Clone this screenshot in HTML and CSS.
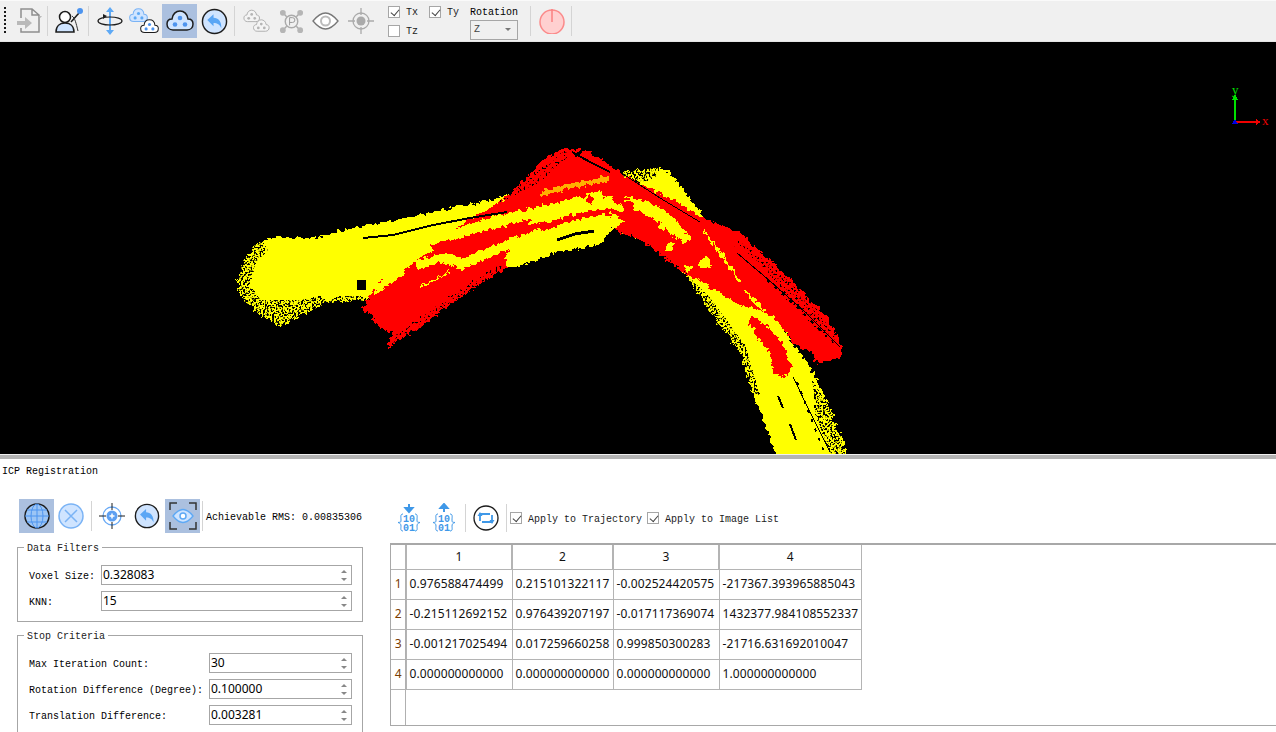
FILE: index.html
```html
<!DOCTYPE html>
<html lang="en">
<head>
<meta charset="utf-8">
<title>ICP Registration</title>
<link rel="stylesheet" href="styles.css">
</head>
<body>
<svg class="defs" width="0" height="0" aria-hidden="true">
  <defs>
    <symbol id="cloud" viewBox="0 0 28 24"><path d="M7 21C3 21 1 18 1 15 1 12 3 10 6 10 6.500 5 10 2 14 2 18 2 21.500 5 22 10 25 10 27 12 27 15 27 18 25 21 21 21Z"/><circle class="d" cx="14" cy="9" r="2.300"/><circle class="d" cx="9" cy="15.500" r="2.300"/><circle class="d" cx="19" cy="15.500" r="2.300"/></symbol>
    <symbol id="back" viewBox="0 0 28 28"><circle cx="14" cy="14" r="12.500" fill="#cfe4ff" stroke="#1c1c1c" stroke-width="1.500"/><path d="M6.500 12.500 13 6.500V10C18 10 21.500 14 21 21 19.500 17 17 15.500 13 15.500V19Z" fill="#5aa6f5"/></symbol>
    <filter id="rough" x="-5%" y="-5%" width="110%" height="110%" color-interpolation-filters="sRGB"><feTurbulence type="fractalNoise" baseFrequency=".22" numOctaves="2" seed="4" result="n"/><feDisplacementMap in="SourceGraphic" in2="n" scale="8" xChannelSelector="R" yChannelSelector="G"/></filter>
    <filter id="speck" x="-5%" y="-5%" width="110%" height="110%" color-interpolation-filters="sRGB"><feTurbulence type="fractalNoise" baseFrequency=".55" numOctaves="1" seed="9"/><feColorMatrix values="0 0 0 0 0 0 0 0 0 0 0 0 0 0 0 14 0 0 0 -7" result="m"/><feComposite in="SourceGraphic" in2="m" operator="in"/></filter>
    <filter id="sparse" x="-5%" y="-5%" width="110%" height="110%" color-interpolation-filters="sRGB"><feTurbulence type="fractalNoise" baseFrequency=".5" numOctaves="1" seed="21"/><feColorMatrix values="0 0 0 0 0 0 0 0 0 0 0 0 0 0 0 14 0 0 0 -8.300" result="m"/><feComposite in="SourceGraphic" in2="m" operator="in"/></filter>
  </defs>
</svg>
<div class="app">
  <header class="toolbar">
    <span class="grip"></span>
    <button class="tool first"><svg width="26" height="28" viewBox="0 0 26 28"><path d="M4 11V2H15L22 8V25H4V21M15 2V8H22" fill="none" stroke="#8e8e8e" stroke-width="1.500"/><path d="M0 14H8V10L15 16 8 22V18H0Z" fill="#b9b9b9"/><path d="M22 9h3l-1.500 2z" fill="#bbb"/></svg></button>
    <span class="sep s1a"></span>
    <button class="tool w28"><svg width="28" height="28" viewBox="0 0 28 28"><circle cx="10" cy="10" r="5.500" fill="#fff" stroke="#1c1c1c" stroke-width="1.500"/><path d="M1 25C1 19 5 16 10 16S19 19 19 25Z" fill="#cfe4ff" stroke="#1c1c1c" stroke-width="1.500"/><path d="M16 15 24 6" stroke="#1c1c1c" stroke-width="1.500"/><path d="M17 9C20 11 21 16 23 24" fill="none" stroke="#333"/><circle cx="25" cy="4" r="3" fill="#4d94ef"/></svg></button>
    <span class="sep"></span>
    <button class="tool w28"><svg width="26" height="30" viewBox="0 0 26 30"><path d="M13 1 9 6H12V24H9L13 29 17 24H14V6H17Z" fill="#5ea9f5"/><ellipse cx="13" cy="15" rx="12" ry="4" fill="none" stroke="#1c1c1c" stroke-width="1.200"/><path d="M6 8 10 10 6 13Z" fill="#1c1c1c"/></svg></button>
    <button class="tool w30 m5"><svg width="30" height="28" viewBox="0 0 30 28"><use href="#cloud" class="c-blue" x="0" y="0" width="19" height="17"/><use href="#cloud" class="c-dark" x="11" y="11" width="19" height="17"/></svg></button>
    <button class="tool w35 on m3"><svg width="28" height="24" viewBox="0 0 28 24"><use href="#cloud" class="c-dark big" width="28" height="24"/></svg></button>
    <button class="tool w30 m2"><svg width="27" height="27"><use href="#back" width="27" height="27"/></svg></button>
    <span class="sep s2"></span>
    <button class="tool w28 m1"><svg width="27" height="25" viewBox="0 0 28 26"><use href="#cloud" class="c-grey" x="0" y="0" width="18" height="15"/><use href="#cloud" class="c-grey" x="10" y="10" width="18" height="15"/></svg></button>
    <button class="tool w28 m7"><svg width="25" height="25" viewBox="0 0 26 26"><g stroke="#aaa" stroke-width="1.500" fill="none"><circle cx="13" cy="13" r="6.500"/><path d="M4 4 8 8M22 4 18 8M4 22 8 18M22 22 18 18"/></g><g fill="#b5b5b5"><circle cx="4" cy="4" r="3"/><circle cx="22" cy="4" r="3"/><circle cx="4" cy="22" r="3"/><circle cx="22" cy="22" r="3"/></g><path d="M11 17V9h3a2.200 2.200 0 0 1 0 5h-3" fill="none" stroke="#999"/></svg></button>
    <button class="tool w28 m6"><svg width="27" height="18" viewBox="0 0 27 18"><path d="M1 9C6 3 10 1 13.500 1S21 3 26 9C21 15 17 17 13.500 17S6 15 1 9Z" fill="#fff" stroke="#777" stroke-width="1.300"/><circle cx="13.500" cy="9" r="4.500" fill="#fff" stroke="#bbb" stroke-width="2"/></svg></button>
    <button class="tool w28 m8"><svg width="26" height="26" viewBox="0 0 26 26"><circle cx="13" cy="13" r="8" fill="none" stroke="#aaa" stroke-width="1.300"/><circle cx="13" cy="13" r="4.500" fill="#aaa"/><path d="M13 0V7M13 19V26M0 13H7M19 13H26" stroke="#aaa" stroke-width="1.300"/></svg></button>
    <div class="axes">
      <label class="check"><span class="box ticked"></span><span class="t">Tx</span></label>
      <label class="check"><span class="box ticked"></span><span class="t">Ty</span></label>
      <label class="check"><span class="box"></span><span class="t">Tz</span></label>
    </div>
    <div class="rotation">
      <span class="rot-title">Rotation</span>
      <div class="combo"><span>Z</span><i class="caret"></i></div>
    </div>
    <span class="sep s4"></span>
    <button class="tool w28 power"><svg width="26" height="26" viewBox="0 0 26 26"><circle cx="13" cy="14" r="12" fill="#ffd0d0" stroke="#fb8a8a" stroke-width="1.500"/><path d="M13 1V14" stroke="#fb8080" stroke-width="1.500"/></svg></button>
    <span class="sep s5"></span>
  </header>

  <main class="viewport">
    <svg class="cloud-svg" width="1276" height="412" viewBox="0 42 1276 412">
      <g class="axis">
        <path d="M1235 122V98" stroke="#00e000" stroke-width="2"/><path d="M1232 100 1235 94 1238 100Z" fill="#00e000"/>
        <path d="M1235 122H1258" stroke="#f00000" stroke-width="2"/><path d="M1256 119 1261 122 1256 125Z" fill="#f00000"/>
        <path d="M1235 119 1238 124H1232Z" fill="#0000e0"/>
        <text class="ax-y" x="1232" y="94">y</text><text class="ax-x" x="1262" y="125">x</text>
      </g>

      <g filter="url(#rough)">
        <polygon class="y" points="237,283 245,257 257,243 277,237 310,239 353,228 420,215 483,202 520,192 560,178 600,172 623,172 657,168 668,172 673,176 700,212 740,260 790,340 810,367 827,400 848,456 777,456 753,393 740,353 720,327 687,277 660,250 640,240 612,228 603,242 590,247 560,250 540,257 507,267 460,285 420,290 363,300 327,303 297,317 280,327 257,313 240,295"/>
      </g>
      <g filter="url(#speck)">
        <polygon class="k" points="232,285 245,252 262,240 268,250 256,262 250,285 262,302 292,312 280,335 245,322"/>
        <polygon class="k" points="262,300 300,300 320,296 330,303 300,316 280,326"/>
        <polygon class="k" points="685,272 712,300 745,345 760,395 752,395 735,350 715,325 686,282"/>
        <polygon class="k" points="300,312 340,296 365,296 362,303 330,306 302,320"/>
        <polygon class="k" points="614,166 660,158 658,176 640,184 618,180"/>
        <polygon class="k" points="812,380 835,415 845,454 830,454 815,415"/>
      </g>
      <g filter="url(#rough)">
        <polygon class="r" points="363,308 377,283 417,253 440,237 503,200 540,163 563,148 587,150 627,177 667,197 707,220 740,233 773,263 807,297 827,317 842,347 840,358 817,363 808,345 793,330 773,312 740,305 713,289 683,272 640,240 610,227 540,253 507,267 460,297 420,327 388,348 393,332 383,330"/>
        <polygon class="r" points="752,315 765,325 780,340 792,365 785,378 775,375 768,350 755,335"/>
      </g>
      <g filter="url(#sparse)">
        <polygon class="k" points="392,348 425,324 465,297 508,270 500,264 460,288 420,316 392,338"/>
        <polygon class="k" points="535,172 565,150 575,150 540,182 495,205"/>
        <polygon class="k" points="738,240 775,268 810,300 838,340 832,345 800,312 765,280 732,250"/>
        <polygon class="k" points="615,228 650,245 690,274 680,276 645,254 612,236"/>
      </g>
      <g filter="url(#rough)">
        <polygon class="y" points="372,288 417,250 440,233 503,214 540,206 585,196 600,190 606,200 570,212 540,222 500,230 470,235 440,245 415,262 380,292"/>
        <polygon class="y" points="540,232 575,220 610,212 625,222 608,232 590,247 560,252 540,258 510,268 503,256 520,240"/>
        <polygon class="y" points="415,262 445,252 462,258 500,243 540,228 545,238 500,252 462,270 442,262 418,270"/>
      </g>
      <g class="streaks" filter="url(#rough)">
        <polyline class="sy w12" points="545,218 575,207 610,203 640,205 665,218 682,236"/>
        <polyline class="sy w2" points="375,293 405,272"/>
        <polyline class="sy w2" points="420,287 450,272"/>
        <polyline class="so w5" points="540,194 570,186 610,178"/>
        <polyline class="sr w5" points="430,247 470,238 500,230 530,222"/>
      </g>
      <g filter="url(#rough)">
        <polygon class="r" points="692,232 715,232 745,250 775,280 800,318 812,352 795,345 775,318 745,305 715,287 695,268"/>
      </g>
      <g class="streaks" filter="url(#rough)">
        <polyline class="sy w2" points="703,230 722,255 740,282"/>
        <polyline class="sy w2" points="745,290 765,312"/>
      </g>
      <g filter="url(#rough)" class="blobs">
        <circle class="y" cx="661" cy="227" r="4"/><circle class="y" cx="685" cy="237" r="5"/><circle class="y" cx="670" cy="247" r="4"/><circle class="y" cx="705" cy="263" r="6"/><circle class="y" cx="688" cy="268" r="3"/><circle class="y" cx="722" cy="255" r="3"/>
        <circle class="r" cx="590" cy="200" r="4"/><circle class="r" cx="618" cy="199" r="6"/><circle class="r" cx="628" cy="205" r="6"/><circle class="r" cx="607" cy="213" r="3"/><circle class="r" cx="753" cy="322" r="5"/>
      </g>
      <g class="slits">
        <polyline class="s2" points="363,238 393,235 433,225 470,218 507,212"/>
        <polyline class="s1" points="737,253 770,281 805,312 840,347"/>
        <polyline class="d3" points="767,280 800,310 827,337"/>
        <polyline class="s1" points="793,377 810,412 830,452"/>
        <polyline class="d3" points="797,382 808,410 824,452"/>
        <polyline class="s2" points="778,396 783,408"/><polyline class="s2" points="790,424 796,440"/>
        <polyline class="s3" points="557,240 575,234 594,231"/>
        <polyline class="s2" points="572,152 590,162 610,172"/><polyline class="s3" points="575,156 582,151"/>
        <polyline class="s1" points="620,172 660,198 700,222"/>
        <rect x="357" y="280" width="9" height="10"/>
      </g>
    </svg>
  </main>

  <div class="splitter"></div>

  <section class="panel">
    <div class="panel-title">ICP Registration</div>
    <div class="panel-body">
      <div class="left">
        <div class="row-tools">
          <button class="tool w35 on"><svg width="26" height="26" viewBox="0 0 26 26"><circle cx="13" cy="13" r="12" fill="#9cc5f5" stroke="#1c1c1c" stroke-width="1.500"/><g fill="none" stroke="#4d94ef"><ellipse cx="13" cy="13" rx="6" ry="12"/><path d="M13 1V25M1 13H25M3 7H23M3 19H23"/></g></svg></button>
          <button class="tool w26 m4"><svg width="26" height="26" viewBox="0 0 26 26"><circle cx="13" cy="13" r="12" fill="#cfe4ff" stroke="#7ab3f5" stroke-width="1.500"/><path d="M7 7 19 19M19 7 7 19" stroke="#7ab3f5" stroke-width="1.500"/></svg></button>
          <span class="sep s6"></span>
          <button class="tool w26 m7"><svg width="26" height="26" viewBox="0 0 26 26"><circle cx="13" cy="13" r="9" fill="none" stroke="#6aaaf5" stroke-width="1.300"/><circle cx="13" cy="13" r="5.500" fill="#5ea0f2"/><path d="M13 0V7M13 19V26M0 13H7M19 13H26" stroke="#1c1c1c"/><path d="M10.500 13H15.500M13 10.500V15.500" stroke="#fff" stroke-width="1.500"/></svg></button>
          <button class="tool w26 m9"><svg width="26" height="26"><use href="#back" width="26" height="26"/></svg></button>
          <button class="tool w35 on m5"><svg width="28" height="28" viewBox="0 0 28 28"><path d="M1 8V1H8M20 1H27V8M27 20V27H20M8 27H1V20" fill="none" stroke="#333" stroke-width="1.500"/><path d="M4 14C8 9 11 7.500 14 7.500S20 9 24 14C20 19 17 20.500 14 20.500S8 19 4 14Z" fill="#cfe4ff" stroke="#5ea9f5" stroke-width="1.300"/><circle cx="14" cy="14" r="3" fill="#fff" stroke="#5ea9f5" stroke-width="1.500"/></svg></button>
          <span class="sep s7"></span>
          <span class="rms t">Achievable RMS: 0.00835306</span>
        </div>

        <div class="group">
          <div class="group-title">Data Filters</div>
          <div class="field short"><span class="t">Voxel Size:</span><div class="spin"><span>0.328083</span><div class="spin-arrows"><i class="up"></i><i class="down"></i></div></div></div>
          <div class="field short"><span class="t">KNN:</span><div class="spin"><span>15</span><div class="spin-arrows"><i class="up"></i><i class="down"></i></div></div></div>
        </div>

        <div class="group second">
          <div class="group-title">Stop Criteria</div>
          <div class="field long"><span class="t">Max Iteration Count:</span><div class="spin"><span>30</span><div class="spin-arrows"><i class="up"></i><i class="down"></i></div></div></div>
          <div class="field long"><span class="t">Rotation Difference (Degree):</span><div class="spin"><span>0.100000</span><div class="spin-arrows"><i class="up"></i><i class="down"></i></div></div></div>
          <div class="field long"><span class="t">Translation Difference:</span><div class="spin"><span>0.003281</span><div class="spin-arrows"><i class="up"></i><i class="down"></i></div></div></div>
        </div>
      </div>

      <div class="right">
        <div class="matrix-tools">
          <svg class="mx" width="24" height="30" viewBox="0 0 24 30"><path d="M12 1V8M8.500 5 12 9 15.500 5Z" stroke="#3f98e8" fill="#3f98e8" stroke-width="2"/><g fill="none" stroke="#3f98e8"><path d="M6 11C3 11 4 14 4 17S3 19 1 19.500C3 20 4 21 4 23S3 28 6 28M18 11C21 11 20 14 20 17S21 19 23 19.500C21 20 20 21 20 23S21 28 18 28"/></g><text class="mx-t" x="12" y="19">10</text><text class="mx-t" x="12" y="28">01</text></svg>
          <svg class="mx gap12" width="24" height="30" viewBox="0 0 24 30"><path d="M12 9V2M8.500 5 12 1 15.500 5Z" stroke="#3f98e8" fill="#3f98e8" stroke-width="2"/><g fill="none" stroke="#3f98e8"><path d="M6 11C3 11 4 14 4 17S3 19 1 19.500C3 20 4 21 4 23S3 28 6 28M18 11C21 11 20 14 20 17S21 19 23 19.500C21 20 20 21 20 23S21 28 18 28"/></g><text class="mx-t" x="12" y="19">10</text><text class="mx-t" x="12" y="28">01</text></svg>
          <span class="sep s8"></span>
          <svg class="loop" width="26" height="26" viewBox="0 0 26 26"><circle cx="13" cy="13" r="12" fill="#fff" stroke="#1c1c1c" stroke-width="1.300"/><g fill="none" stroke="#3f98e8" stroke-width="1.800"><path d="M7 16V9H17M19 10V17H9"/></g><path d="M4.500 11 7 7 9.500 11ZM16.500 15 19 19 21.500 15Z" fill="#3f98e8"/></svg>
          <span class="sep s9"></span>
          <label class="check inline"><span class="box ticked"></span><span class="t">Apply to Trajectory</span></label>
          <label class="check inline"><span class="box ticked"></span><span class="t">Apply to Image List</span></label>
        </div>
        <div class="table-wrap">
          <table class="matrix">
            <colgroup><col class="c0"><col class="c1"><col class="c2"><col class="c3"><col class="c4"></colgroup>
            <thead><tr><th class="corner"></th><th>1</th><th>2</th><th>3</th><th>4</th></tr></thead>
            <tbody>
              <tr><th>1</th><td>0.976588474499</td><td>0.215101322117</td><td>-0.002524420575</td><td>-217367.393965885043</td></tr>
              <tr><th>2</th><td>-0.215112692152</td><td>0.976439207197</td><td>-0.017117369074</td><td>1432377.984108552337</td></tr>
              <tr><th>3</th><td>-0.001217025494</td><td>0.017259660258</td><td>0.999850300283</td><td>-21716.631692010047</td></tr>
              <tr><th>4</th><td>0.000000000000</td><td>0.000000000000</td><td>0.000000000000</td><td>1.000000000000</td></tr>
            </tbody>
          </table>
        </div>
      </div>
    </div>
  </section>
</div>
</body>
</html>
```

FILE: styles.css
```css
* { box-sizing: border-box; }
html, body { margin: 0; padding: 0; background: #fff; }
body { font: 10px/12px "Liberation Mono", "Noto Sans CJK SC", monospace; color: #000; overflow: hidden; }
.defs { position: absolute; }
.app { width: 1276px; height: 732px; display: flex; flex-direction: column; overflow: hidden; }
.t { padding-top: 3px; }

/* toolbar */
.toolbar { height: 42px; flex: none; display: flex; align-items: center; background: #f0f0f0; border-top: 1px solid #fafafa; border-bottom: 1px solid #e4e4e4; padding-left: 4px; }
.grip { width: 2px; height: 28px; margin-right: 11px; background: repeating-linear-gradient(#1a1a1a 0 2px, transparent 2px 4px); }
.tool { border: 0; padding: 0; background: none; display: flex; align-items: center; justify-content: center; flex: none; height: 34px; }
.tool svg { display: block; }
.w26 { width: 26px; } .w28 { width: 28px; } .w30 { width: 30px; } .w35 { width: 35px; }
.on { background: #abc0df; }
.first { width: 26px; }
.m1 { margin-left: 1px; } .m2 { margin-left: 2px; } .m3 { margin-left: 3px; } .m4 { margin-left: 4px; } .m5 { margin-left: 5px; }
.m6 { margin-left: 6px; } .m7 { margin-left: 7px; } .m8 { margin-left: 8px; } .m9 { margin-left: 9px; }
.sep { width: 1px; height: 30px; background: #d4d4d4; flex: none; margin: 0 7px 0 5px; }
.sep.s1a { margin: 0 7px 0 4px; }
.sep.s2 { margin: 0 6px 0 5px; }
.sep.s4 { margin: 0 7px 0 12px; }
.sep.s5 { margin: 0 0 0 5px; }
.sep.s6 { margin: 0 0 0 7px; }
.sep.s7 { margin: 0 3px 0 2px; }
.sep.s8 { margin: 0 7px 0 9px; height: 28px; }
.sep.s9 { margin: 0 3px 0 7px; height: 28px; }

/* check boxes */
.axes { display: grid; grid-template-columns: 41px auto; row-gap: 4px; flex: none; margin-left: 13px; }
.check { display: flex; align-items: center; gap: 6px; white-space: nowrap; color: #222; }
.box { width: 12px; height: 12px; border: 1px solid #a6a6a6; background: #fff; flex: none; display: block; }
.box.ticked::after { content: ""; display: block; width: 7px; height: 4px; margin: 2px 0 0 1.500px; border-left: 1.200px solid #444; border-bottom: 1.200px solid #444; transform: rotate(-50deg); }
.rotation { margin-left: 11px; display: flex; flex-direction: column; flex: none; padding-top: 2px; }
.rot-title { height: 15px; padding-top: 2px; color: #000; }
.combo { width: 48px; height: 20px; border: 1px solid #a6a6a6; display: flex; align-items: center; justify-content: space-between; padding: 0 6px 0 3px; color: #444; }
.caret { width: 0; height: 0; border: 3px solid transparent; border-top: 3px solid #777; border-bottom: 0; }

/* viewport */
.viewport { height: 412px; flex: none; background: #000; overflow: hidden; }
.cloud-svg { display: block; shape-rendering: crispEdges; }
.y { fill: #ff0; } .r { fill: #f00; } .k { fill: #000; }
.axis text { font: 13px "Liberation Serif", serif; }
.ax-y { fill: #00e000; } .ax-x { fill: #f00000; }
.streaks polyline { fill: none; }
.sy { stroke: #ff0; } .so { stroke: #ffb000; } .sr { stroke: #f00; }
.w12 { stroke-width: 12; } .w2 { stroke-width: 2; } .w5 { stroke-width: 5; }
.slits polyline { fill: none; stroke: #000; }
.s1 { stroke-width: 1; } .s2 { stroke-width: 2; } .s3 { stroke-width: 3; }
.d3 { stroke-width: 2; stroke-dasharray: 3 7; }

.splitter { height: 5px; flex: none; background: #b4b4b4; border-top: 1px solid #f0f0f0; }

/* cloud icon variants */
.c-blue { fill: #cfe4ff; stroke: #7ab3f5; stroke-width: 1.500; --d: #5ea9f5; }
.c-dark { fill: #fff; stroke: #1c1c1c; stroke-width: 1.500; --d: #4d94ef; }
.c-dark.big { fill: #cfe4ff; }
.c-grey { fill: #f4f4f4; stroke: #aaa; stroke-width: 1.500; --d: #b5b5b5; }
.d { fill: var(--d); stroke: none; }

/* panel */
.panel { flex: 1; min-height: 0; background: #fff; }
.panel-title { height: 22px; padding: 7px 0 0 2px; }
.panel-body { display: flex; padding: 18px 0 0 17px; gap: 27px; }
.left { width: 346px; flex: none; }
.row-tools { display: flex; align-items: center; height: 34px; padding-left: 2px; }
.rms { white-space: nowrap; }
.group { border: 1px solid #a6a6a6; margin-top: 14px; padding: 0 10px 10px 11px; }
.group.second { margin-top: 13px; }
.group-title { margin: -8px 0 12px -5px; width: max-content; height: 13px; line-height: 13px; padding: 2px 3px 0; background: #fff; color: #222; }
.field { display: flex; align-items: center; height: 20px; margin-top: 6px; }
.group-title + .field { margin-top: 0; }
.field > span { flex: none; white-space: nowrap; }
.short > span { width: 72px; }
.long > span { width: 180px; }
.spin { flex: 1; height: 20px; border: 1px solid #a6a6a6; display: flex; align-items: center; justify-content: space-between; padding: 0 3px 0 1px; }
.spin > span { font: 12px/18px "Noto Sans", sans-serif; }
.spin-arrows { display: flex; flex-direction: column; gap: 5px; margin-right: 1px; }
.spin-arrows i { display: block; width: 0; height: 0; border: 3px solid transparent; }
.spin-arrows .up { border-top: 0; border-bottom: 3px solid #888; }
.spin-arrows .down { border-bottom: 0; border-top: 3px solid #888; }

/* matrix */
.right { flex: 1; min-width: 0; }
.matrix-tools { display: flex; align-items: center; height: 38px; padding: 0 0 0 7px; }
.mx-t { font: bold 10px "Liberation Mono", monospace; fill: #3f98e8; text-anchor: middle; }
.gap12 { margin-left: 11px; }
.loop { flex: none; }
.check.inline { gap: 6px; margin-right: 5px; }
.table-wrap { margin-top: 6px; height: 183px; border: 1px solid #a8a8a8; border-width: 2px 0 1px 1px; background: linear-gradient(90deg, #fff 14px, #b0b0b0 14px 15px, #fff 15px); }
.matrix { border-collapse: collapse; table-layout: fixed; width: 470px; font: 12px/16px "Noto Sans", sans-serif; letter-spacing: .1px; color: #111; }
.c0 { width: 15px; } .c1 { width: 106px; } .c2 { width: 101px; } .c3 { width: 106px; } .c4 { width: 142px; }
.matrix th { font-weight: 400; padding: 0; text-align: center; }
.matrix thead tr { height: 24px; }
.matrix tbody tr { height: 30px; }
.matrix thead th { border: 2px solid #b4b4b4; border-width: 0 2px 1px 0; }
.matrix thead th:last-child { border-right-width: 1px; }
.matrix tbody th { border: 1px solid #b4b4b4; border-width: 0 1px 1px 0; color: #7a3c00; }
.matrix td { border: 1px solid #b4b4b4; border-width: 0 1px 1px 0; padding: 0 0 0 3px; white-space: nowrap; overflow: hidden; }
```
